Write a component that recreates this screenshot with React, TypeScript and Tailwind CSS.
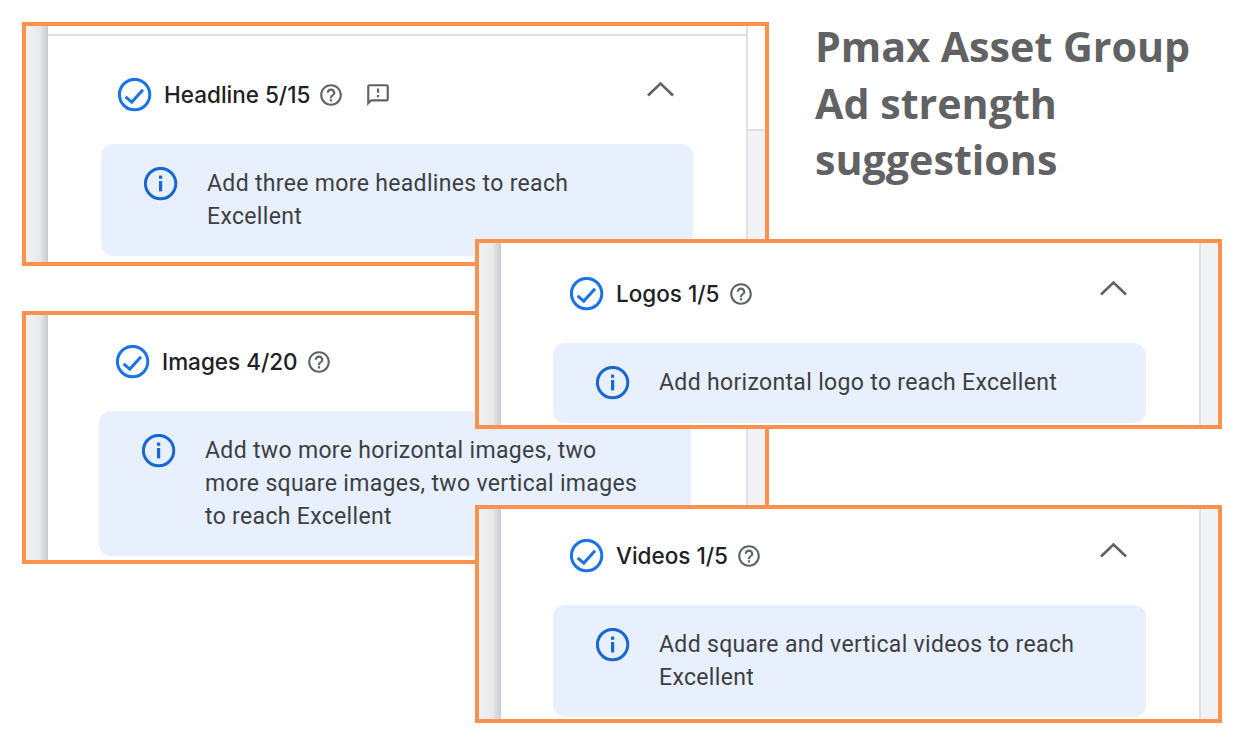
import { MdHelpOutline, MdOutlineFeedback } from "react-icons/md";

const CheckIcon = () => (
	<svg width="34" height="34" viewBox="0 0 34 34" fill="none" className="shrink-0">
		<circle cx="16.6" cy="16.6" r="15.2" stroke="#1a73e8" strokeWidth="3" />
		<path d="M7.6 18.8l6.2 5.3L25 11.8" stroke="#1a73e8" strokeWidth="3" />
	</svg>
);

const InfoIcon = () => (
	<svg width="34" height="34" viewBox="0 0 34 34" fill="none" className="shrink-0">
		<circle cx="16.6" cy="16.6" r="15.2" stroke="#1967d2" strokeWidth="3" />
		<rect x="15" y="8.6" width="3.2" height="3.2" fill="#1967d2" />
		<rect x="15" y="14" width="3.2" height="10.4" fill="#1967d2" />
	</svg>
);

const Chevron = () => (
	<svg width="27" height="16" viewBox="0 0 27 16" fill="none" className="ml-auto mb-[12px] shrink-0">
		<path d="M1 14.5L13.5 2.5L26 14.5" stroke="#5f6368" strokeWidth="2.6" />
	</svg>
);

type PanelProps = {
	box: string;
	top: string;
	indent: string;
	title: string;
	text: string;
	feedback?: boolean;
	rule?: boolean;
	trackTop?: boolean;
	inset: string;
};

const Panel = ({ box, top, indent, title, text, feedback, rule, trackTop, inset }: PanelProps) => (
	<section className={`absolute flex overflow-hidden border-4 border-[#ff914d] bg-white ${box}`}>
		<div className="w-[22px] shrink-0 bg-gradient-to-r from-[#f0f2f4] via-[#e8eaec] via-60% to-[#c8cacd]" />
		<div className="flex min-w-0 flex-1 flex-col">
			{rule && <div className="mt-2 h-0.5 shrink-0 bg-[#dfdfe6]" />}
			<div className={`flex h-[34px] shrink-0 items-center ${top} ${indent}`}>
				<CheckIcon />
				<h3 className="mb-px ml-[12px] font-['Inter',sans-serif] text-[22.5px] font-medium text-[#202124]">{title}</h3>
				<MdHelpOutline className="ml-2 shrink-0 text-[26px] text-[#5f6368]" />
				{feedback && <MdOutlineFeedback className="ml-[21px] shrink-0 text-[26px] text-[#5f6368]" />}
				<Chevron />
			</div>
			<div className={`mt-[32px] flex rounded-xl bg-[#e8f0fe] pr-6 pb-[23px] pt-[23px] pl-[43px] ${inset}`}>
				<InfoIcon />
				<p className="ml-[29px] max-w-[440px] font-['Roboto',sans-serif] text-[23px] leading-[33px] tracking-[0.33px] text-[#3c4043]">
					{text}
				</p>
			</div>
		</div>
		<div className="flex w-[19px] shrink-0 flex-col border-l-2 border-[#dfdfe6] bg-[#f1f3f4]">
			{trackTop && <div className="h-[105px] border-b-2 border-[#dfdfe6] bg-white" />}
		</div>
	</section>
);

export default function App() {
	return (
		<main className="relative h-[745px] w-[1243px] overflow-hidden bg-white">
			<h1 className="absolute left-[815px] top-[18px] w-[400px] font-['Open_Sans',sans-serif] text-[41.2px] font-bold leading-[56.5px] text-[#616264]">
				Pmax Asset Group Ad strength suggestions
			</h1>
			<Panel
				box="left-[22px] top-[22px] h-[244px] w-[747px]"
				top="mt-[42px]"
				indent="pl-[70px] pr-[72px]"
				inset="ml-[53px] mr-[53px]"
				title="Headline 5/15"
				text="Add three more headlines to reach Excellent"
				feedback
				rule
				trackTop
			/>
			<Panel
				box="left-[22px] top-[311px] h-[253px] w-[747px]"
				top="mt-[30px]"
				indent="pl-[68px] pr-[74px]"
				inset="ml-[51px] mr-[55px]"
				title="Images 4/20"
				text="Add two more horizontal images, two more square images, two vertical images to reach Excellent"
			/>
			<Panel
				box="left-[475px] top-[239px] h-[190px] w-[747px]"
				top="mt-[34px]"
				indent="pl-[69px] pr-[72px]"
				inset="ml-[52px] mr-[53px]"
				title="Logos 1/5"
				text="Add horizontal logo to reach Excellent"
			/>
			<Panel
				box="left-[475px] top-[505px] h-[218px] w-[747px]"
				top="mt-[30px]"
				indent="pl-[69px] pr-[72px]"
				inset="ml-[52px] mr-[53px]"
				title="Videos 1/5"
				text="Add square and vertical videos to reach Excellent"
			/>
		</main>
	);
}
